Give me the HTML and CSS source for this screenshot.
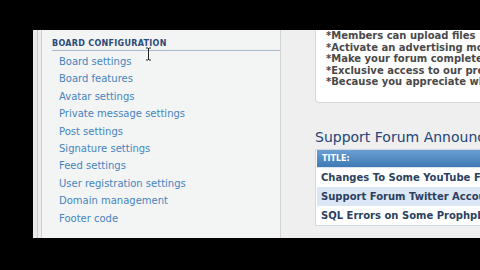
FILE: index.html
```html
<!DOCTYPE html>
<html>
<head>
<meta charset="utf-8">
<link rel="stylesheet" href="styles.css">
</head>
<body>
<div class="page">
  <div class="strip"><div class="strip-inner"></div></div>
  <div class="sidebar">
    <div class="side-head">BOARD CONFIGURATION</div>
    <ul class="side-list">
      <li><a>Board settings</a></li>
      <li><a>Board features</a></li>
      <li><a>Avatar settings</a></li>
      <li><a>Private message settings</a></li>
      <li><a>Post settings</a></li>
      <li><a>Signature settings</a></li>
      <li><a>Feed settings</a></li>
      <li><a>User registration settings</a></li>
      <li><a>Domain management</a></li>
      <li><a>Footer code</a></li>
    </ul>
  </div>
  <div class="main">
    <div class="perks">
      <div>*Members can upload files</div>
      <div>*Activate an advertising module</div>
      <div>*Make your forum completely ad-free</div>
      <div>*Exclusive access to our premium styles</div>
      <div>*Because you appreciate what we do</div>
    </div>
    <h2 class="ann-title">Support Forum Announcements</h2>
    <div class="ann-box">
      <table class="ann-table">
        <tr class="head"><th>TITLE:</th></tr>
        <tr><td>Changes To Some YouTube Features</td></tr>
        <tr class="alt"><td>Support Forum Twitter Account</td></tr>
        <tr><td>SQL Errors on Some Prophpbb Forums</td></tr>
      </table>
    </div>
  </div>
</div>
<svg class="cursor" width="7" height="14" viewBox="0 0 7 14">
  <path d="M1 1h2M4 1h2M3.5 1v12M1 13h2M4 13h2" stroke="#222" stroke-width="1" fill="none"/>
</svg>
</body>
</html>
```

FILE: styles.css
```css
html, body {
  margin: 0;
  padding: 0;
  background: #000;
  width: 480px;
  height: 270px;
  overflow: hidden;
}

body {
  position: relative;
  font-family: "DejaVu Sans", Verdana, sans-serif;
}

.page {
  margin: 30px 0 0 33px;
  height: 208px;
  width: 600px;
  display: flex;
  background: #efefef;
}

.strip {
  width: 9px;
  background: #e9e9e9;
  display: flex;
  justify-content: flex-end;
}

.strip-inner {
  width: 3px;
  border-left: 1px solid #c9c9c9;
  border-right: 1px solid #cdcdcd;
  background: #eeeeee;
}

.sidebar {
  width: 228px;
  padding: 8px 0 0 10px;
  background: #f3f4f4;
  border-right: 1px solid #d3d3d3;
}

.side-head {
  font-size: 8px;
  font-weight: bold;
  line-height: 12px;
  color: #2b4a7c;
  border-bottom: 1px solid #a9b9ce;
  letter-spacing: 0.3px;
}

.side-list {
  list-style: none;
  margin: 0;
  padding: 2px 0 0 7px;
}

.side-list li {
  font-size: 10px;
  line-height: 17.4px;
  white-space: nowrap;
}

.side-list a {
  color: #4584bd;
}

.main {
  flex: 1;
  padding-left: 34px;
  min-width: 0;
}

.perks {
  background: #fff;
  border-left: 1px solid #d8d8d8;
  border-bottom: 1px solid #d8d8d8;
  border-bottom-left-radius: 4px;
  padding: 0 0 14px 10px;
  font-size: 10px;
  font-weight: bold;
  line-height: 11.5px;
  color: #4a4a4a;
  white-space: nowrap;
}

.ann-title {
  margin: 26px 0 0 0;
  font-size: 14px;
  font-weight: normal;
  line-height: 17px;
  color: #234577;
  white-space: nowrap;
}

.ann-box {
  margin-top: 3px;
  border: 1px solid #cfd8e3;
  background: #fff;
  padding: 0 0 0 1px;
}

.ann-table {
  border-collapse: collapse;
  width: 300px;
}

.ann-table th {
  height: 17px;
  padding: 0 0 0 5px;
  text-align: left;
  font-size: 8px;
  font-weight: bold;
  color: #fff;
  background: linear-gradient(#6a9fd2, #3f79b3);
  border-bottom: 1px solid #dde6f0;
}

.ann-table td {
  height: 19.3px;
  padding: 0 0 0 4px;
  font-size: 10px;
  font-weight: bold;
  color: #2c3f60;
  white-space: nowrap;
}

.ann-table tr.alt td {
  background: #dbe7f5;
}

.cursor {
  position: absolute;
  left: 145px;
  top: 47px;
}
```
